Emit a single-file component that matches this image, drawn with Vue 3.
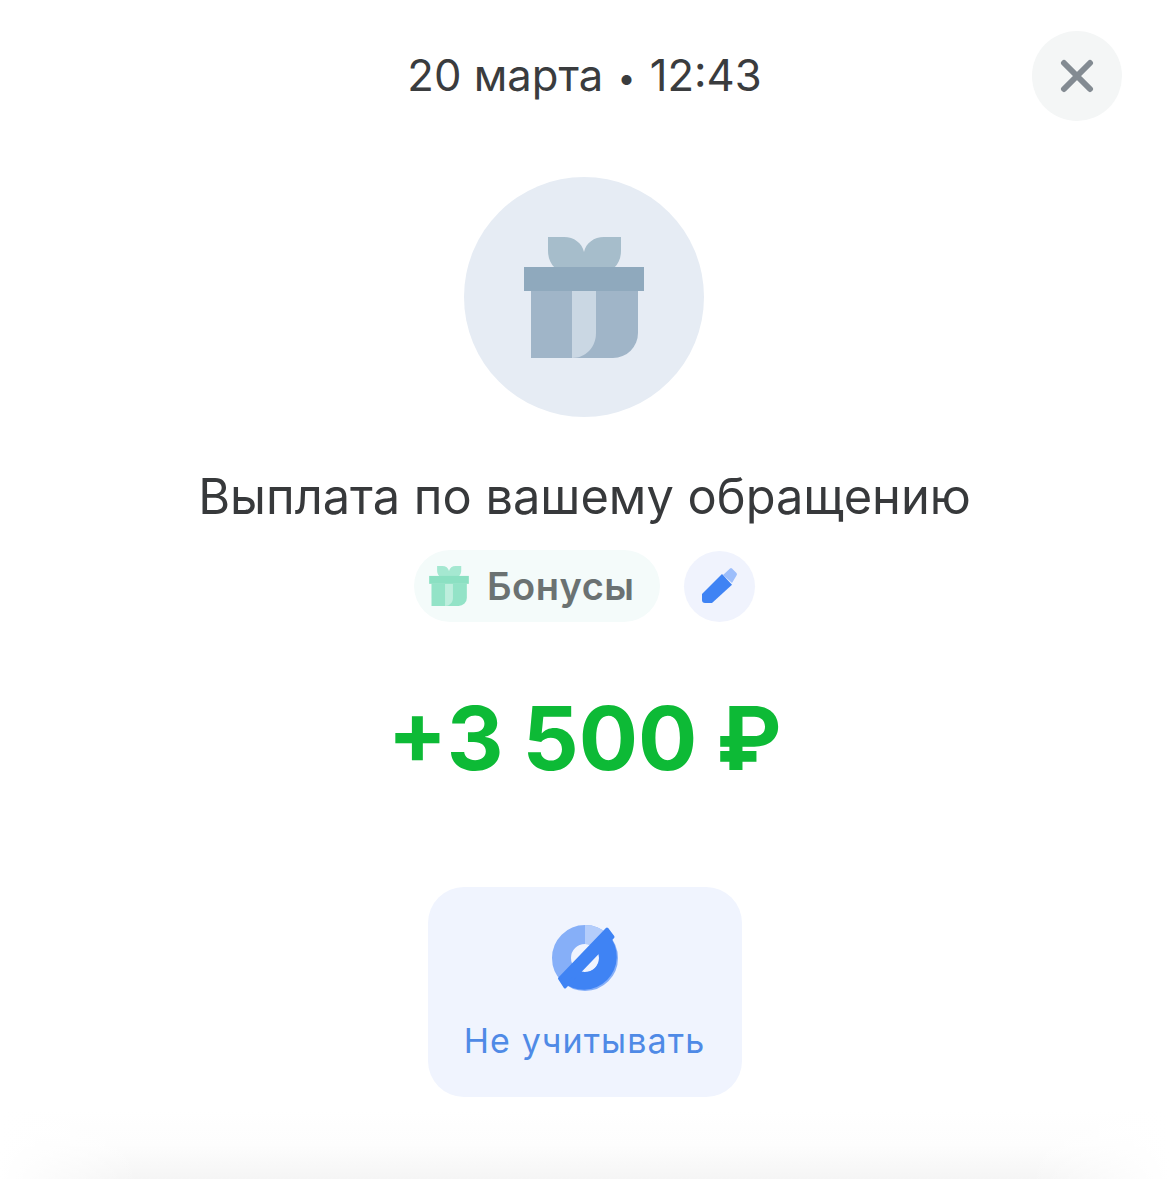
<template>
  <div class="screen">
    <header class="top">
      <span class="side"></span>
      <div class="date">20 марта <span class="dot">•</span> 12:43</div>
      <div class="side side-end">
        <button class="close" aria-label="Закрыть">
          <svg width="34" height="34" viewBox="0 0 34 34">
            <path d="M4 4 L30 30 M30 4 L4 30" fill="none" stroke="#838b92" stroke-width="6" stroke-linecap="round" />
          </svg>
        </button>
      </div>
    </header>

    <div class="avatar">
      <svg class="gift-big" width="120" height="121" viewBox="0 0 120 121">
        <path d="M24 0 H40 C50 0 58 6 60 15 C62 6 70 0 80 0 H97 V13 C97 21 95 26 90 31 H31 C26 26 24 21 24 13 Z" fill="#a6bdcb" />
        <path d="M7 54 H114 V96 A25 25 0 0 1 89 121 H7 Z" fill="#a0b5c8" />
        <path d="M48 54 H72 V96 C72 110 62 121 48 121 Z" fill="#cad7e3" />
        <rect x="0" y="30" width="120" height="24" fill="#8fa9bd" />
      </svg>
    </div>

    <h1 class="title">Выплата по вашему обращению</h1>

    <div class="tags">
      <div class="chip">
        <svg width="40" height="40" viewBox="0 0 120 121">
          <path d="M24 0 H40 C50 0 58 6 60 15 C62 6 70 0 80 0 H97 V13 C97 21 95 26 90 31 H31 C26 26 24 21 24 13 Z" fill="#a5e8d1" />
          <path d="M7 54 H114 V96 A25 25 0 0 1 89 121 H7 Z" fill="#93e3c7" />
          <path d="M48 54 H72 V96 C72 110 62 121 48 121 Z" fill="#bdeedd" />
          <rect x="0" y="30" width="120" height="24" fill="#8be0c2" />
        </svg>
        <span>Бонусы</span>
      </div>
      <button class="edit" aria-label="Изменить">
        <svg width="40" height="40" viewBox="0 0 40 40">
          <path d="M23 9 L30 2.5 Q31 1.5 32 2.5 L36.5 7 Q37.5 8 36.5 9.5 L32 17 Z" fill="#9dbefb" />
          <path d="M2 28 L22 8 L32 18.7 L12 37 H5 Q2 37 2 34 Z" fill="#3f83f4" />
        </svg>
      </button>
    </div>

    <div class="amount">+3 500 ₽</div>

    <button class="action">
      <svg width="80" height="80" viewBox="0 0 80 80">
        <circle cx="40" cy="40" r="23.5" fill="none" stroke="#86aff8" stroke-width="19" />
        <path d="M40 7 A33 33 0 0 1 63.3 16.7 L49.9 30.1 A14 14 0 0 0 40 26 Z" fill="#b4cdfb" />
        <path d="M63.3 16.7 A33 33 0 0 1 16.7 63.3 L30.1 49.9 A14 14 0 0 0 49.9 30.1 Z" fill="#3f83f4" />
        <path d="M14.5 60.5 L62 11 L68 19 L20 69 Z" fill="#3f83f4" stroke="#3f83f4" stroke-width="3" stroke-linejoin="round" />
      </svg>
      <span>Не учитывать</span>
    </button>

    <div class="shade"></div>
  </div>
</template>

<script setup>
</script>

<style scoped>
.screen {
  width: 1169px;
  height: 1179px;
  overflow: hidden;
  background: #fff;
  display: flex;
  flex-direction: column;
  align-items: center;
  font-family: Inter, "Noto Sans", sans-serif;
}

.top {
  width: 100%;
  box-sizing: border-box;
  padding: 31px 47px 0;
  display: grid;
  grid-template-columns: 1fr auto 1fr;
  align-items: center;
}

.side-end {
  display: flex;
  justify-content: flex-end;
}

.date {
  font-size: 43.6px;
  line-height: 90px;
  height: 90px;
  color: #3a3c3e;
  white-space: nowrap;
}

.dot {
  font-size: 32px;
  line-height: 0;
  margin: 0 2px;
  vertical-align: 2px;
}

.close {
  width: 90px;
  height: 90px;
  border: none;
  padding: 0;
  border-radius: 50%;
  background: #f4f6f6;
  display: flex;
  align-items: center;
  justify-content: center;
}

.avatar {
  margin: 56px 1px 0 0;
  width: 240px;
  height: 240px;
  border-radius: 50%;
  background: #e6ecf4;
  display: flex;
  align-items: center;
  justify-content: center;
}

.title {
  margin: 50px 0 0;
  font-size: 48.75px;
  line-height: 60px;
  font-weight: 400;
  color: #37393b;
}

.tags {
  margin-top: 23px;
  display: flex;
  align-items: center;
  gap: 24px;
}

.chip {
  width: 246px;
  height: 72px;
  box-sizing: border-box;
  padding-left: 15px;
  border-radius: 36px;
  background: #f4fbfa;
  display: flex;
  align-items: center;
  gap: 18px;
  font-size: 38px;
  letter-spacing: 0.5px;
  font-weight: 600;
  color: #6b7272;
}

.edit {
  width: 71px;
  height: 71px;
  border: none;
  padding: 0;
  border-radius: 50%;
  background: #f0f3fd;
  display: flex;
  align-items: center;
  justify-content: center;
}

.amount {
  margin-top: 66px;
  font-size: 88px;
  line-height: 100px;
  font-weight: 700;
  color: #0dba36;
  word-spacing: -2px;
}

.action {
  margin-top: 99px;
  width: 314px;
  height: 210px;
  border: none;
  padding: 31px 0 0;
  box-sizing: border-box;
  border-radius: 36px;
  background: #f0f4fe;
  display: flex;
  flex-direction: column;
  align-items: center;
  font-family: inherit;
  font-size: 34px;
  letter-spacing: 1.1px;
  line-height: 40px;
  color: #4f8ae6;
}

.action span {
  margin-top: 23px;
}

.shade {
  margin-top: 13px;
  width: 100%;
  height: 69px;
  background:
    linear-gradient(90deg, #fff, rgba(255, 255, 255, 0) 12%, rgba(255, 255, 255, 0) 88%, #fff),
    linear-gradient(180deg, #fff, #fdfdfd 50%, #f5f5f5);
}
</style>

<style>
html, body {
  margin: 0;
  background: #fff;
}
</style>
